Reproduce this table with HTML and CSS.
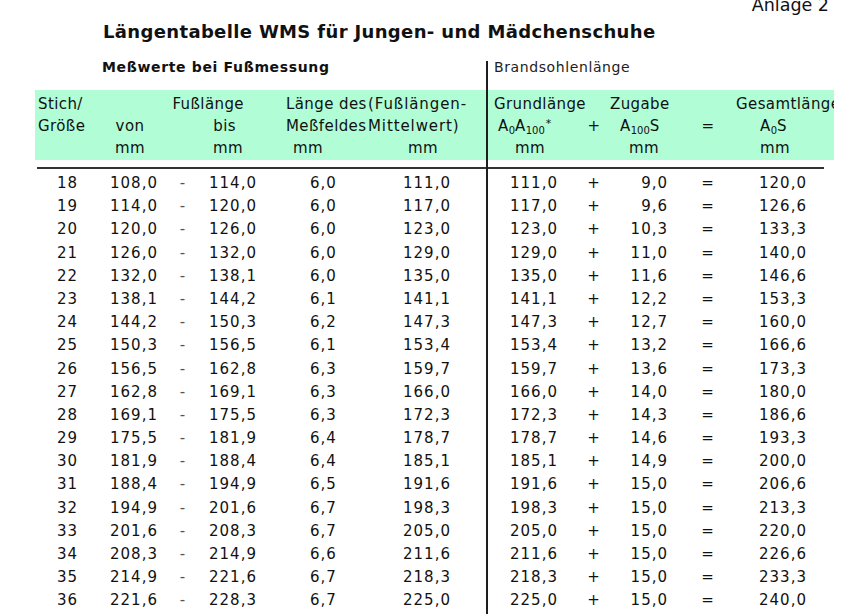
FILE: index.html
```html
<!DOCTYPE html>
<html lang="de">
<head>
<meta charset="utf-8">
<title>Längentabelle WMS</title>
<link rel="stylesheet" href="styles.css">
</head>
<body>
<div class="annex">Anlage 2</div>
<h1 class="title">Längentabelle WMS für Jungen- und Mädchenschuhe</h1>
<div class="sheet">
  <section class="panel panel-left">
    <div class="subhead">Meßwerte bei Fußmessung</div>
    <div class="band l-grid">
      <div class="h-stich">Stich/</div>
      <div class="h-fuss">Fußlänge</div>
      <div class="h-laenge">Länge des</div>
      <div class="h-mittel">(Fußlängen-</div>
      <div class="h-stich">Größe</div>
      <div class="h-von">von</div>
      <div></div>
      <div class="h-bis">bis</div>
      <div class="h-laenge">Meßfeldes</div>
      <div class="h-mittel">Mittelwert)</div>
      <div></div>
      <div class="h-von">mm</div>
      <div></div>
      <div class="h-bismm">mm</div>
      <div class="h-laengemm">mm</div>
      <div class="h-mittelmm">mm</div>
    </div>
    <div class="rule"></div>
    <div class="rows l-grid">
      <div>18</div><div>108,0</div><div>-</div><div>114,0</div><div>6,0</div><div>111,0</div>
      <div>19</div><div>114,0</div><div>-</div><div>120,0</div><div>6,0</div><div>117,0</div>
      <div>20</div><div>120,0</div><div>-</div><div>126,0</div><div>6,0</div><div>123,0</div>
      <div>21</div><div>126,0</div><div>-</div><div>132,0</div><div>6,0</div><div>129,0</div>
      <div>22</div><div>132,0</div><div>-</div><div>138,1</div><div>6,0</div><div>135,0</div>
      <div>23</div><div>138,1</div><div>-</div><div>144,2</div><div>6,1</div><div>141,1</div>
      <div>24</div><div>144,2</div><div>-</div><div>150,3</div><div>6,2</div><div>147,3</div>
      <div>25</div><div>150,3</div><div>-</div><div>156,5</div><div>6,1</div><div>153,4</div>
      <div>26</div><div>156,5</div><div>-</div><div>162,8</div><div>6,3</div><div>159,7</div>
      <div>27</div><div>162,8</div><div>-</div><div>169,1</div><div>6,3</div><div>166,0</div>
      <div>28</div><div>169,1</div><div>-</div><div>175,5</div><div>6,3</div><div>172,3</div>
      <div>29</div><div>175,5</div><div>-</div><div>181,9</div><div>6,4</div><div>178,7</div>
      <div>30</div><div>181,9</div><div>-</div><div>188,4</div><div>6,4</div><div>185,1</div>
      <div>31</div><div>188,4</div><div>-</div><div>194,9</div><div>6,5</div><div>191,6</div>
      <div>32</div><div>194,9</div><div>-</div><div>201,6</div><div>6,7</div><div>198,3</div>
      <div>33</div><div>201,6</div><div>-</div><div>208,3</div><div>6,7</div><div>205,0</div>
      <div>34</div><div>208,3</div><div>-</div><div>214,9</div><div>6,6</div><div>211,6</div>
      <div>35</div><div>214,9</div><div>-</div><div>221,6</div><div>6,7</div><div>218,3</div>
      <div>36</div><div>221,6</div><div>-</div><div>228,3</div><div>6,7</div><div>225,0</div>
    </div>
  </section>
  <section class="panel panel-right">
    <div class="subhead">Brandsohlenlänge</div>
    <div class="band r-grid">
      <div class="h-grund">Grundlänge</div>
      <div></div>
      <div class="h-zug">Zugabe</div>
      <div></div>
      <div class="h-ges">Gesamtlänge</div>
      <div class="h-grundsym">A<sub>0</sub>A<sub>100</sub><sup>*</sup></div>
      <div class="h-op">+</div>
      <div class="h-zugsym">A<sub>100</sub>S</div>
      <div class="h-op">=</div>
      <div class="h-gessym">A<sub>0</sub>S</div>
      <div class="h-grundmm">mm</div>
      <div></div>
      <div class="h-zugmm">mm</div>
      <div></div>
      <div class="h-gessym">mm</div>
    </div>
    <div class="rule"></div>
    <div class="rows r-grid">
      <div>111,0</div><div>+</div><div>9,0</div><div>=</div><div>120,0</div>
      <div>117,0</div><div>+</div><div>9,6</div><div>=</div><div>126,6</div>
      <div>123,0</div><div>+</div><div>10,3</div><div>=</div><div>133,3</div>
      <div>129,0</div><div>+</div><div>11,0</div><div>=</div><div>140,0</div>
      <div>135,0</div><div>+</div><div>11,6</div><div>=</div><div>146,6</div>
      <div>141,1</div><div>+</div><div>12,2</div><div>=</div><div>153,3</div>
      <div>147,3</div><div>+</div><div>12,7</div><div>=</div><div>160,0</div>
      <div>153,4</div><div>+</div><div>13,2</div><div>=</div><div>166,6</div>
      <div>159,7</div><div>+</div><div>13,6</div><div>=</div><div>173,3</div>
      <div>166,0</div><div>+</div><div>14,0</div><div>=</div><div>180,0</div>
      <div>172,3</div><div>+</div><div>14,3</div><div>=</div><div>186,6</div>
      <div>178,7</div><div>+</div><div>14,6</div><div>=</div><div>193,3</div>
      <div>185,1</div><div>+</div><div>14,9</div><div>=</div><div>200,0</div>
      <div>191,6</div><div>+</div><div>15,0</div><div>=</div><div>206,6</div>
      <div>198,3</div><div>+</div><div>15,0</div><div>=</div><div>213,3</div>
      <div>205,0</div><div>+</div><div>15,0</div><div>=</div><div>220,0</div>
      <div>211,6</div><div>+</div><div>15,0</div><div>=</div><div>226,6</div>
      <div>218,3</div><div>+</div><div>15,0</div><div>=</div><div>233,3</div>
      <div>225,0</div><div>+</div><div>15,0</div><div>=</div><div>240,0</div>
    </div>
  </section>
</div>
</body>
</html>
```
FILE: styles.css
```css
html, body {
  margin: 0;
  padding: 0;
  background: #ffffff;
}
body {
  width: 854px;
  height: 614px;
  overflow: hidden;
  font-family: "DejaVu Sans", "Verdana", sans-serif;
  color: #111111;
}

.annex {
  height: 10px;
  line-height: 10px;
  font-size: 17.5px;
  text-align: right;
  padding-right: 25px;
}

.title {
  margin: 10px 0 0;
  padding-left: 103px;
  font-size: 18px;
  letter-spacing: 0.35px;
  font-weight: bold;
  line-height: 24px;
  white-space: nowrap;
}

.sheet {
  display: flex;
  margin-top: 17px;
  height: 553px;
}

.panel-left {
  width: 486px;
  padding-left: 35px;
  box-sizing: border-box;
}
.panel-right {
  flex: 1;
  border-left: 2px solid #1e1e1e;
  padding-right: 20px;
}

.subhead {
  height: 29px;
  line-height: 12px;
  font-size: 14px;
  white-space: nowrap;
}
.panel-left .subhead {
  padding-left: 67px;
  font-weight: bold;
  letter-spacing: 0.65px;
}
.panel-right .subhead {
  padding-left: 6px;
  color: #222222;
  letter-spacing: 0.6px;
}

.l-grid {
  display: grid;
  grid-template-columns: 65px 68px 30px 70px 98px 120px;
}
.r-grid {
  display: grid;
  grid-template-columns: 92px 28px 72px 56px 98px;
}

.band {
  background: #b0fdd6;
  padding: 3px 0 1px;
  grid-auto-rows: 22px;
  line-height: 22px;
  font-size: 15px;
  letter-spacing: 0.4px;
  white-space: nowrap;
  overflow: hidden;
}
.band sub {
  font-size: 10px;
  vertical-align: -3px;
  line-height: 0;
  letter-spacing: 0;
}
.band sup {
  font-size: 11px;
  vertical-align: 4px;
  line-height: 0;
  padding-left: 1px;
}

.h-stich { padding-left: 3px; }
.h-fuss { grid-column: span 3; text-align: right; padding-right: 24px; }
.h-von { text-align: center; padding-right: 8px; }
.h-bis { text-align: right; padding-right: 32px; }
.h-bismm { text-align: right; padding-right: 25px; }
.h-laenge { padding-left: 18px; }
.h-laengemm { padding-left: 25px; }
.h-mittel { padding-left: 2px; letter-spacing: 0.9px; }
.h-mittelmm { padding-left: 42px; }

.h-grund { padding-left: 6px; }
.h-grundsym { padding-left: 10px; }
.h-grundmm { padding-left: 27px; }
.h-op { text-align: center; }
.h-zug { padding-left: 2px; }
.h-zugsym { padding-left: 12px; }
.h-zugmm { padding-left: 21px; }
.h-ges { padding-left: 0; }
.h-gessym { padding-left: 24px; }

.rule {
  margin-top: 7px;
  height: 2px;
  background: #333333;
}
.panel-left .rule { margin-left: 2px; }
.panel-right .rule { margin-right: 10px; }

.rows {
  padding-top: 3px;
  grid-auto-rows: 23.2px;
  line-height: 23.2px;
  font-size: 15px;
  letter-spacing: 1px;
  white-space: nowrap;
}

.rows.l-grid > :nth-child(6n+1),
.rows.l-grid > :nth-child(6n+2),
.rows.l-grid > :nth-child(6n+4) { text-align: center; }
.rows.l-grid > :nth-child(6n+3) { text-align: center; color: #555555; }
.rows.l-grid > :nth-child(6n+5) { padding-left: 42px; }
.rows.l-grid > :nth-child(6n+6) { padding-left: 37px; }

.rows.r-grid > :nth-child(5n+1) { padding-left: 22px; }
.rows.r-grid > :nth-child(5n+2),
.rows.r-grid > :nth-child(5n+4) { text-align: center; }
.rows.r-grid > :nth-child(5n+3) { text-align: right; padding-right: 12px; }
.rows.r-grid > :nth-child(5n+5) { padding-left: 23px; }
```
